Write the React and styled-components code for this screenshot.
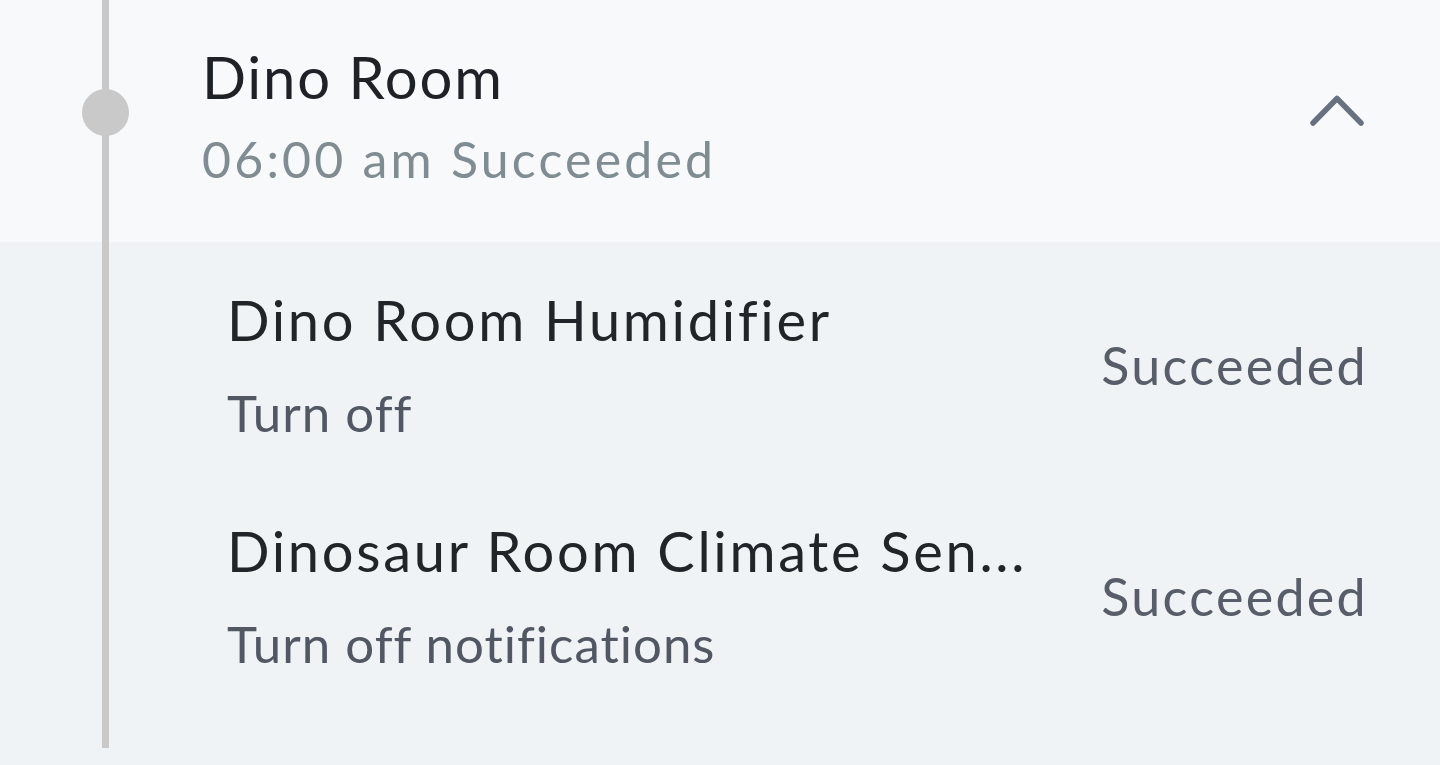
import React from 'react'
import styled, { createGlobalStyle } from 'styled-components'

const GlobalStyle = createGlobalStyle`
  html, body {
    margin: 0;
    padding: 0;
    background: #eff3f6;
  }
  body {
    font-family: Lato, 'Noto Sans', sans-serif;
  }
`

const Container = styled.div`
  width: 1440px;
  height: 765px;
  position: relative;
  overflow: hidden;
  background-color: #eff3f6;
`

const Rail = styled.div`
  position: absolute;
  left: 102px;
  top: 0;
  width: 7px;
  height: 748px;
  background-color: #c9c9c9;
  z-index: 1;
`

const Header = styled.div`
  height: 242px;
  box-sizing: border-box;
  display: flex;
  align-items: center;
  padding: 0 76px 11px 0;
  background-color: #f8f9fb;
`

const Marker = styled.div`
  width: 202px;
  flex-shrink: 0;
  display: flex;
  padding-left: 82px;
  box-sizing: border-box;
`

const Dot = styled.div`
  width: 47px;
  height: 47px;
  border-radius: 50%;
  background-color: #c9c9c9;
  margin-bottom: 7px;
  position: relative;
  z-index: 2;
`

const HeaderText = styled.div`
  flex: 1;
  display: flex;
  flex-direction: column;
  gap: 17px;
`

const Title = styled.div`
  font-size: 58px;
  line-height: 70px;
  letter-spacing: 1.8px;
  color: #1e2226;
`

const Subtitle = styled.div`
  font-size: 50px;
  line-height: 60px;
  letter-spacing: 3.2px;
  color: #7f8c92;
`

const Toggle = styled.svg`
  width: 54px;
  height: 31px;
  margin-bottom: 11px;
  flex-shrink: 0;
`

const List = styled.div`
  display: flex;
  flex-direction: column;
  gap: 73px;
  padding: 44px 72px 0 227px;
`

const Row = styled.div`
  display: flex;
  align-items: center;
  justify-content: space-between;
  gap: 40px;
`

const RowText = styled.div`
  display: flex;
  flex-direction: column;
  gap: 28px;
  min-width: 0;
`

const Name = styled.div`
  font-size: 56px;
  line-height: 68px;
  letter-spacing: 2.7px;
  color: #212429;
  white-space: nowrap;
`

const Action = styled.div`
  font-size: 51px;
  line-height: 62px;
  letter-spacing: 1px;
  color: #515864;
  white-space: nowrap;
`

const Status = styled.div`
  font-size: 52px;
  line-height: 62px;
  letter-spacing: 2.3px;
  color: #575e69;
  flex-shrink: 0;
`

const actions = [
  { id: 1, name: 'Dino Room Humidifier', action: 'Turn off', status: 'Succeeded' },
  { id: 2, name: 'Dinosaur Room Climate Sen...', action: 'Turn off notifications', status: 'Succeeded' }
]

function App() {
  return (
    <>
      <GlobalStyle />
      <Container>
        <Rail />
        <Header>
          <Marker>
            <Dot />
          </Marker>
          <HeaderText>
            <Title>Dino Room</Title>
            <Subtitle>06:00 am Succeeded</Subtitle>
          </HeaderText>
          <Toggle viewBox="0 0 54 31" fill="none">
            <path d="M3 28 L27 3.5 L51 28" stroke="#677180" strokeWidth="5.5" strokeLinecap="round" strokeLinejoin="round" />
          </Toggle>
        </Header>
        <List>
          {actions.map(item => (
            <Row key={item.id}>
              <RowText>
                <Name>{item.name}</Name>
                <Action>{item.action}</Action>
              </RowText>
              <Status>{item.status}</Status>
            </Row>
          ))}
        </List>
      </Container>
    </>
  )
}

export default App
